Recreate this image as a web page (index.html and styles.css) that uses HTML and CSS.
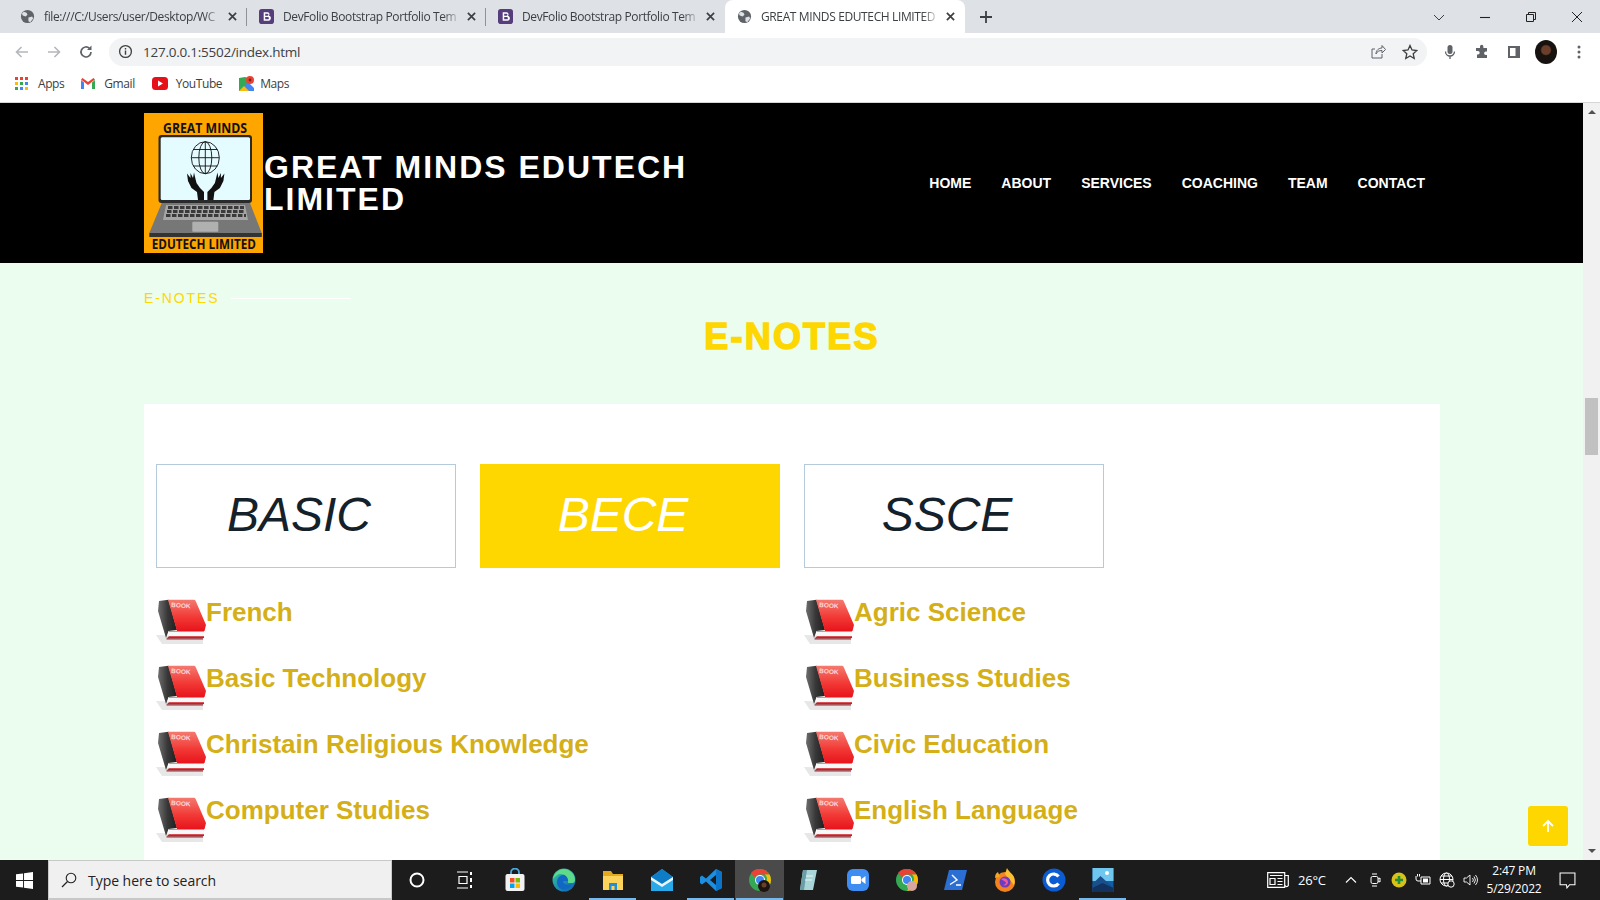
FILE: index.html
```html
<!DOCTYPE html>
<html>
<head>
<title>GREAT MINDS EDUTECH LIMITED</title>
<link rel="stylesheet" href="styles.css">
</head>
<body>

<!-- shared icons -->
<svg class="defs" width="0" height="0">
    <defs>
        <linearGradient id="coverRed" x1="0" y1="0" x2="0" y2="1">
            <stop offset="0" stop-color="#f47a70"/>
            <stop offset="0.55" stop-color="#f23a36"/>
            <stop offset="1" stop-color="#e8141c"/>
        </linearGradient>
        <linearGradient id="spineDark" x1="0" y1="0" x2="1" y2="0">
            <stop offset="0" stop-color="#6e6e6e"/>
            <stop offset="0.5" stop-color="#383838"/>
            <stop offset="1" stop-color="#1e1e1e"/>
        </linearGradient>
        <linearGradient id="edgeGrad" x1="0" y1="0" x2="1" y2="1">
            <stop offset="0" stop-color="#36c6a0"/>
            <stop offset="1" stop-color="#0c5fb5"/>
        </linearGradient>
    </defs>
    <symbol id="globe" viewBox="0 0 16 16">
        <circle cx="8" cy="8" r="7" fill="#5f6368"/>
        <path d="M4 3l3 1 1 2-2 2-3-1-1-2zM9 9l4-1 1 2-3 4-2-1z" fill="#dee1e6"/>
    </symbol>
    <symbol id="bs" viewBox="0 0 16 16">
        <rect width="16" height="16" rx="3" fill="#563d7c"/>
        <path d="M5 3.500h4a2.200 2.200 0 0 1 1.500 3.800A2.400 2.400 0 0 1 9.500 12.500H5zM6.600 5v2.200H9a1.100 1.100 0 0 0 0-2.200zM6.600 8.500V11H9.300a1.250 1.250 0 0 0 0-2.500z" fill="#fff" fill-rule="evenodd"/>
    </symbol>
    <symbol id="close" viewBox="0 0 10 10">
        <path d="M1 1l8 8M9 1l-8 8" stroke="#3c4043" stroke-width="1.900" fill="none"/>
    </symbol>
    <symbol id="book" viewBox="0 0 50 46">
        <path d="M0 36l40 1 7 3v5H6z" fill="#e6e7e6"/>
        <path d="M3 2l9.500-1.300L21 31l-8.500 1-2.500 7L2 12z" fill="url(#spineDark)"/>
        <path d="M12 .7h26c1 0 1.500 .8 2 2L50 26l-1.500 6H21z" fill="url(#coverRed)"/>
        <path d="M13 32h35v5.500H13z" fill="#f8f8f8"/>
        <path d="M13 32h35v.8H13z" fill="#8a8a8a"/>
        <path d="M10.500 39.500l2.500-2.200h35v1l-1 1.200z" fill="#d01a22"/>
        <path d="M10.500 40h36.500" stroke="#5a1014" stroke-width=".8"/>
        <text x="15" y="8" class="book-word" transform="rotate(4 15 8)">BOOK</text>
    </symbol>
    <symbol id="chromeLogo" viewBox="0 0 24 24">
        <circle cx="12" cy="12" r="11" fill="#34a853"/>
        <path d="M12 1a11 11 0 0 1 9.500 5.500H12a5.500 5.500 0 0 0-5 3L3 5a11 11 0 0 1 9-4z" fill="#ea4335"/>
        <path d="M21.500 6.500A11 11 0 0 1 12 23l5-8a5.500 5.500 0 0 0 0-8.500z" fill="#fbbc05"/>
        <circle cx="12" cy="12" r="5" fill="#fff"/>
        <circle cx="12" cy="12" r="4" fill="#4285f4"/>
    </symbol>
</svg>

<!-- browser tab strip -->
<div class="tabstrip">
    <div class="tab">
        <svg class="favicon"><use href="#globe"/></svg>
        <span class="tab-title">file:///C:/Users/user/Desktop/WC</span>
        <svg class="tab-close"><use href="#close"/></svg>
    </div>
    <div class="tab">
        <svg class="favicon"><use href="#bs"/></svg>
        <span class="tab-title">DevFolio Bootstrap Portfolio Tem</span>
        <svg class="tab-close"><use href="#close"/></svg>
    </div>
    <div class="tab tab-last">
        <svg class="favicon"><use href="#bs"/></svg>
        <span class="tab-title">DevFolio Bootstrap Portfolio Tem</span>
        <svg class="tab-close"><use href="#close"/></svg>
    </div>
    <div class="tab tab-active">
        <svg class="favicon"><use href="#globe"/></svg>
        <span class="tab-title">GREAT MINDS EDUTECH LIMITED</span>
        <svg class="tab-close"><use href="#close"/></svg>
    </div>
    <svg class="new-tab" viewBox="0 0 14 14"><path d="M7 1v12M1 7h12" stroke="#3c4043" stroke-width="1.800"/></svg>
    <div class="win-controls">
        <svg viewBox="0 0 12 12"><path d="M1 4l5 5 5-5" stroke="#3c4043" fill="none"/></svg>
        <svg viewBox="0 0 12 12"><path d="M1 6.500h10" stroke="#222" stroke-width="1.100"/></svg>
        <svg viewBox="0 0 12 12"><path d="M1.500 3.500h7v7h-7zM3.500 3.500v-2h7v7h-2" stroke="#222" fill="none"/></svg>
        <svg viewBox="0 0 12 12"><path d="M1 1l10 10M11 1L1 11" stroke="#222" fill="none"/></svg>
    </div>
</div>

<!-- address bar -->
<div class="toolbar">
    <svg class="tool-icon" viewBox="0 0 16 16"><path d="M14 8H3M7.500 3L2.500 8l5 5" stroke="#b4b7bb" stroke-width="1.600" fill="none"/></svg>
    <svg class="tool-icon" viewBox="0 0 16 16"><path d="M2 8h11M8.500 3l5 5-5 5" stroke="#b4b7bb" stroke-width="1.600" fill="none"/></svg>
    <svg class="tool-icon" viewBox="0 0 16 16"><path d="M13 8a5 5 0 1 1-1.500-3.600" stroke="#5f6368" stroke-width="1.700" fill="none"/><path d="M13.500 1.500v4.500H9z" fill="#5f6368"/></svg>
    <div class="omnibox">
        <svg class="info-icon" viewBox="0 0 16 16"><circle cx="8" cy="8" r="6.300" stroke="#3c4043" stroke-width="1.400" fill="none"/><path d="M8 7v4.500M8 4.300v1.500" stroke="#3c4043" stroke-width="1.500"/></svg>
        <span class="url">127.0.0.1:5502/index.html</span>
        <svg class="omni-icon omni-share" viewBox="0 0 16 16"><path d="M12 10v4H2V5h3M6 10c0-4 3-6 6-6V1.500L15.500 5.500 12 9V6.500c-3 0-5 1-6 3.500z" stroke="#5f6368" fill="none"/></svg>
        <svg class="omni-icon" viewBox="0 0 16 16"><path d="M8 1.500l2 4.500 4.800 .5-3.600 3.200 1 4.800L8 12l-4.200 2.500 1-4.800L1.200 6.500 6 6z" stroke="#3c4043" stroke-width="1.300" fill="none"/></svg>
    </div>
    <div class="tool-right">
        <svg class="tool-icon" viewBox="0 0 16 16"><rect x="5.500" y="1" width="5" height="9" rx="2.500" fill="#5f6368"/><path d="M3.500 7.500a4.500 4.500 0 0 0 9 0M8 12v3" stroke="#5f6368" stroke-width="1.300" fill="none"/></svg>
        <svg class="tool-icon" viewBox="0 0 16 16"><path d="M6 2.500a1.700 1.700 0 0 1 3.400 0V4H13v3.500h-1.200a1.700 1.700 0 0 0 0 3.400H13V14H3v-3.500h1a1.700 1.700 0 0 0 0-3.400H2V4h4z" fill="#5f6368"/></svg>
        <svg class="tool-icon tool-panel" viewBox="0 0 16 16"><path d="M2 2h12v12H2zM4 4v8h5.500V4z" fill="#5f6368" fill-rule="evenodd"/></svg>
        <div class="avatar"></div>
        <svg class="tool-icon tool-menu" viewBox="0 0 16 16"><circle cx="8" cy="3" r="1.500" fill="#5f6368"/><circle cx="8" cy="8" r="1.500" fill="#5f6368"/><circle cx="8" cy="13" r="1.500" fill="#5f6368"/></svg>
    </div>
</div>

<!-- bookmarks -->
<div class="bookmarks">
    <a class="bm bm-apps">
        <svg viewBox="0 0 13 13">
            <g fill="#ea4335"><rect width="3" height="3"/><rect x="5" width="3" height="3"/><rect x="10" width="3" height="3"/></g>
            <g fill="#fbbc05"><rect y="5" width="3" height="3"/></g>
            <g fill="#34a853"><rect x="5" y="5" width="3" height="3"/><rect y="10" width="3" height="3"/></g>
            <g fill="#4285f4"><rect x="10" y="5" width="3" height="3"/><rect x="5" y="10" width="3" height="3"/><rect x="10" y="10" width="3" height="3" fill="#fbbc05"/></g>
        </svg>
        Apps
    </a>
    <a class="bm bm-gmail">
        <svg viewBox="0 0 14 11"><path d="M0 2v9h3V4.500z" fill="#4285f4"/><path d="M14 2v9h-3V4.500z" fill="#34a853"/><path d="M0 1.500 7 7l7-5.500L12.500 0 7 4 1.500 0z" fill="#ea4335"/></svg>
        Gmail
    </a>
    <a class="bm bm-yt">
        <svg viewBox="0 0 16 13"><rect width="16" height="13" rx="3.500" fill="#e5101a"/><path d="M6 3.500v6l5-3z" fill="#fff"/></svg>
        YouTube
    </a>
    <a class="bm bm-maps">
        <svg viewBox="0 0 15 15"><path d="M0 2l6-1 3 1v12l-3 1H0z" fill="#34a853"/><path d="M0 15l9-9 6 6v3z" fill="#4285f4"/><path d="M0 15l5-5 5 5z" fill="#fbbc05"/><circle cx="11" cy="4" r="4" fill="#ea4335"/><circle cx="11" cy="4" r="1.400" fill="#8e1b14"/></svg>
        Maps
    </a>
</div>

<div class="viewport">
    <div class="page">
        <header class="site-header">
            <svg class="logo" viewBox="0 0 119 140">
                <rect width="119" height="140" fill="#ffa500"/>
                <text x="19" y="19.500" class="logo-text" textLength="84" lengthAdjust="spacingAndGlyphs">GREAT MINDS</text>
                <rect x="14.500" y="22" width="93.500" height="68" rx="3" fill="#2a2a2a"/>
                <rect x="16.700" y="24.300" width="89.300" height="62.700" rx="1.500" fill="#e4fbff"/>
                <g fill="none" stroke="#111" stroke-width=".9">
                    <ellipse cx="61.300" cy="44.700" rx="14" ry="16"/>
                    <ellipse cx="61.300" cy="44.700" rx="6.500" ry="16"/>
                    <path d="M61.300 28.700v32M47.300 44.700h28M49 36.500h24.600M49 53h24.600"/>
                </g>
                <path id="hand" d="M54 87L53 79 47.500 75 44 68 43 60.500 46.500 65 46.500 60 49 65 50 59.500 51.500 66 52.500 70 56 75 60 79 60 87z" fill="#111"/>
                <use href="#hand" transform="matrix(-1 0 0 1 123.400 0)"/>
                <path d="M17.700 90H106l11.700 30H5.300z" fill="#777"/>
                <rect x="5.300" y="120" width="112.500" height="4" fill="#333"/>
                <path d="M22 92h79l3 15H19z" fill="#a6a6a6"/>
                <g stroke="#3a3a3a" stroke-width="2.800" stroke-dasharray="4.500 1.500">
                    <path d="M24 94.500h76M23 98.500h78M22 102.500h80"/>
                </g>
                <rect x="48.300" y="108.700" width="26" height="10" rx="1" fill="#b0b0b0"/>
                <text x="7.700" y="136" class="logo-text" textLength="104.300" lengthAdjust="spacingAndGlyphs">EDUTECH LIMITED</text>
            </svg>
            <div class="brand">GREAT MINDS EDUTECH LIMITED</div>
            <nav class="site-nav">
                <a>Home</a>
                <a>About</a>
                <a>Services</a>
                <a>Coaching</a>
                <a>Team</a>
                <a>Contact</a>
            </nav>
        </header>

        <section class="notes">
            <div class="eyebrow"><span>E-NOTES</span><i class="eyebrow-line"></i></div>
            <h1 class="notes-title">E-NOTES</h1>

            <div class="notes-card">
                <div class="level-tabs">
                    <a class="level">BASIC</a>
                    <a class="level level-on">BECE</a>
                    <a class="level">SSCE</a>
                </div>
                <ul class="subjects">
                    <li><svg class="book"><use href="#book"/></svg>French</li>
                    <li><svg class="book"><use href="#book"/></svg>Agric Science</li>
                    <li><svg class="book"><use href="#book"/></svg>Basic Technology</li>
                    <li><svg class="book"><use href="#book"/></svg>Business Studies</li>
                    <li><svg class="book"><use href="#book"/></svg>Christain Religious Knowledge</li>
                    <li><svg class="book"><use href="#book"/></svg>Civic Education</li>
                    <li><svg class="book"><use href="#book"/></svg>Computer Studies</li>
                    <li><svg class="book"><use href="#book"/></svg>English Language</li>
                </ul>
            </div>
        </section>

        <a class="to-top">
            <svg viewBox="0 0 14 14"><path d="M7 13V2M2 7l5-5 5 5" stroke="#fff" stroke-width="1.800" fill="none"/></svg>
        </a>
    </div>

    <div class="scrollbar">
        <div class="sb-arrow sb-up"></div>
        <div class="sb-thumb"></div>
        <div class="sb-arrow sb-down"></div>
    </div>
</div>

<!-- windows taskbar -->
<div class="taskbar">
    <div class="start">
        <svg viewBox="0 0 18 18"><path d="M0 2.500l7.500-1v7H0zM8.500 1.300L18 0v8.500H8.500zM0 9.500h7.500v7l-7.500-1zM8.500 9.500H18V18l-9.500-1.300z" fill="#fff"/></svg>
    </div>
    <div class="search">
        <svg viewBox="0 0 16 16"><circle cx="10" cy="6" r="4.800" stroke="#222" stroke-width="1.100" fill="none"/><path d="M6.500 9.500L1 15" stroke="#222" stroke-width="1.300"/></svg>
        <span>Type here to search</span>
    </div>
    <div class="task-item"><svg viewBox="0 0 24 24"><circle cx="12" cy="12" r="6.500" stroke="#fff" stroke-width="2" fill="none"/></svg></div>
    <div class="task-item"><svg viewBox="0 0 24 24"><path d="M3 4h11M3 20h11M5 8.500h8v7H5z" stroke="#fff" stroke-width="1.200" fill="none"/><path d="M17 4v3M17 10v4M17 17v3" stroke="#fff" stroke-width="2"/></svg></div>
    <div class="task-item"><svg viewBox="0 0 24 24"><path d="M8 7V4.500a4 4 0 0 1 8 0V7" stroke="#4aa8e0" stroke-width="1.800" fill="none"/><rect x="2.500" y="6" width="19" height="17" rx="2" fill="#f2f2f2"/><rect x="7" y="10" width="4.500" height="4.500" fill="#f25022"/><rect x="12.500" y="10" width="4.500" height="4.500" fill="#7fba00"/><rect x="7" y="15.500" width="4.500" height="4.500" fill="#00a4ef"/><rect x="12.500" y="15.500" width="4.500" height="4.500" fill="#ffb900"/></svg></div>
    <div class="task-item"><svg viewBox="0 0 24 24"><circle cx="12" cy="12" r="11.500" fill="url(#edgeGrad)"/><path d="M5 14c0-6 6-8 9-7s4 4 3 6h-6c0 3 4 5 9 3-2 5-8 7-11 5-3-1.500-4-4-4-7z" fill="#1168c4"/><path d="M12 1c5 0 11 4 11 11 0 2-1 3-3 3h-4c1-5-2-9-8-9-2 0-5 2-7 5 1-6 6-10 11-10z" fill="#5edb8a"/></svg></div>
    <div class="task-item task-open"><svg viewBox="0 0 24 24"><path d="M2 3h8l2 3h10v4H2z" fill="#e4a91c"/><rect x="2" y="8" width="20" height="14" fill="#fcd45b"/><rect x="8" y="15" width="8" height="7" fill="#1f8fd8"/><rect x="10.500" y="18" width="3" height="4" fill="#fcd45b"/></svg></div>
    <div class="task-item"><svg viewBox="0 0 24 24"><path d="M1 9l11-8 11 8v14H1z" fill="#29a9e8"/><path d="M1 9l11-8 11 8-11 7z" fill="#0e7cc7"/><path d="M1 9l11 7 11-7v3L12 19 1 12z" fill="#e8f6fd"/></svg></div>
    <div class="task-item task-open"><svg viewBox="0 0 24 24"><path d="M17 1l6 3v16l-6 3-10-9.500-4 3L1 15V9l2-1.500 4 3zM17 7l-6 5 6 5z" fill="#1c8fe0" fill-rule="evenodd"/><path d="M17 1l6 3v16l-6 3z" fill="#0b74c8"/></svg></div>
    <div class="task-item task-active task-open"><svg viewBox="0 0 24 24"><use href="#chromeLogo"/><circle cx="16" cy="18" r="6" fill="#1d1512"/><circle cx="16" cy="17" r="2.500" fill="#6b3f2b"/></svg></div>
    <div class="task-item"><svg viewBox="0 0 24 24"><path d="M6 2h14l-4 20H3z" fill="#a9d4d8"/><path d="M6 2h4L7 22H3z" fill="#6a9ea6"/><path d="M9 8h7M8 12h7" stroke="#e6f7f8" stroke-width="1"/></svg></div>
    <div class="task-item"><svg viewBox="0 0 24 24"><rect x="1" y="1" width="22" height="22" rx="6" fill="#3d8df2"/><rect x="5" y="8" width="10" height="8" rx="1.500" fill="#fff"/><path d="M15.500 11l4-3v8l-4-3z" fill="#fff"/></svg></div>
    <div class="task-item"><svg viewBox="0 0 24 24"><use href="#chromeLogo"/><circle cx="17" cy="18" r="5" fill="#d9a5a0"/></svg></div>
    <div class="task-item"><svg viewBox="0 0 24 24"><path d="M5 2h18l-5 20H0z" fill="#2b6fd4"/><path d="M8 7l5 5-7 4.500M12 17h5" stroke="#fff" stroke-width="1.400" fill="none"/></svg></div>
    <div class="task-item"><svg viewBox="0 0 24 24"><circle cx="12" cy="14" r="10" fill="#f4821f"/><path d="M14 0c1 3 5 5 7 9 1 3 1 6 0 8L12 6z" fill="#fcc02e"/><path d="M2 10c0-3 1-5 3-6l2 5z" fill="#f5a623"/><circle cx="12" cy="14" r="5.500" fill="#6a3ec2"/><path d="M8 11c3-2 7 0 7 3s-3 4-5 3c3 0 4-3 1-4z" fill="#ef5a9a"/></svg></div>
    <div class="task-item"><svg viewBox="0 0 24 24"><circle cx="12" cy="12" r="11.500" fill="#0b5bd3"/><path d="M16.500 8.500a6 6 0 1 0 0 7" stroke="#fff" stroke-width="3.200" fill="none"/></svg></div>
    <div class="task-item task-open"><svg viewBox="0 0 24 24"><rect x="1.500" y="0" width="21" height="24" fill="#0f5fa8"/><rect x="1.500" y="0" width="21" height="13" fill="#6fc6ee"/><circle cx="16" cy="5" r="2" fill="#fff"/><path d="M1.500 16l8-8 13 12v4h-21z" fill="#1a4f8c"/><path d="M1.500 24v-4l10-5 11 5v4z" fill="#12325f"/></svg></div>

    <div class="tray">
        <svg class="tray-news" viewBox="0 0 22 16"><path d="M.7 .7h17v14.600h-17zM18 3.500h3.300v10a1.800 1.800 0 0 1-3.300 0M3 3.500h12.500M3 6.500h5v6H3zM10.500 6.500h5M10.500 9.500h5M10.500 12.500h5" stroke="#fff" stroke-width="1.200" fill="none"/></svg>
        <span class="tray-temp">26°C</span>
        <div class="tray-icons">
            <svg viewBox="0 0 16 16"><path d="M3 10.500l5-5 5 5" stroke="#fff" stroke-width="1.100" fill="none"/></svg>
            <svg viewBox="0 0 16 16"><rect x="4" y="4.500" width="7" height="7" rx="1.500" stroke="#fff" fill="none"/><path d="M5 2h5M5 14h5M11 7l2-1v4l-2-1" stroke="#fff" fill="none"/></svg>
            <svg viewBox="0 0 16 16"><circle cx="8" cy="8" r="7.500" fill="#d8c21a"/><path d="M8 4v8M4 8h8" stroke="#1f8f3a" stroke-width="2.600"/></svg>
            <svg viewBox="0 0 16 16"><path d="M6 5h9v7H6zM1 4v3a2 2 0 0 0 2 2h3M2.500 2v2.500M4.500 2v2.500" stroke="#fff" fill="none"/><rect x="8" y="6.500" width="5" height="4" fill="#fff"/></svg>
            <svg viewBox="0 0 16 16"><circle cx="7.500" cy="7.500" r="6.500" stroke="#fff" fill="none"/><ellipse cx="7.500" cy="7.500" rx="3" ry="6.500" stroke="#fff" fill="none"/><path d="M1 7.500h13M2 4h11M2 11h11" stroke="#fff" fill="none"/><circle cx="12" cy="12" r="3.200" fill="#1c1c1c" stroke="#fff"/></svg>
            <svg viewBox="0 0 16 16"><path d="M1 6v4h2.500L7 13V3L3.500 6zM9.500 6a3 3 0 0 1 0 4M11 4.500a5.500 5.500 0 0 1 0 7M12.500 3a8 8 0 0 1 0 10" stroke="#fff" stroke-width=".9" fill="none"/></svg>
        </div>
        <div class="clock"><span>2:47 PM</span><span>5/29/2022</span></div>
        <div class="notify">
            <svg viewBox="0 0 16 16"><path d="M1 1h14v11h-5l-2.500 3-.5-3H1z" stroke="#fff" fill="none"/></svg>
        </div>
    </div>
</div>

</body>
</html>
```

FILE: styles.css
```css
/* Basic styling for the page */
* {
    box-sizing: border-box;
}

html, body {
    margin: 0;
    height: 100%;
    overflow: hidden;
}

body {
    display: flex;
    flex-direction: column;
    font-family: "Liberation Sans", Arial, sans-serif;
    background: #fff;
}

.defs {
    position: absolute;
}

/* browser chrome */
.tabstrip {
    display: flex;
    align-items: center;
    height: 33px;
    padding-left: 8px;
    background: #dee1e6;
    font-family: "Open Sans", sans-serif;
    font-size: 12px;
    color: #3c4043;
}

.tab {
    display: flex;
    align-items: center;
    width: 239px;
    height: 33px;
    padding: 0 10px 0 12px;
    position: relative;
}

.tab::after {
    content: "";
    position: absolute;
    right: 0;
    top: 8px;
    height: 18px;
    width: 1px;
    background: #8f9296;
}

.tab-last::after, .tab-active::after {
    display: none;
}

.tab-active {
    width: 240px;
    background: #fff;
    border-radius: 8px 8px 0 0;
}

.favicon {
    width: 15px;
    height: 15px;
    flex: none;
    margin-right: 9px;
}

.tab-title {
    flex: 1;
    min-width: 0;
    white-space: nowrap;
    letter-spacing: -0.38px;
    -webkit-mask-image: linear-gradient(to right, #000 90%, transparent);
    mask-image: linear-gradient(to right, #000 90%, transparent);
}

.tab-close {
    width: 9px;
    height: 9px;
    flex: none;
    margin-left: 6px;
}

.new-tab {
    width: 14px;
    height: 14px;
    margin-left: 14px;
}

.win-controls {
    display: flex;
    margin-left: auto;
    height: 30px;
    align-items: center;
    padding-right: 17px;
    gap: 34px;
}

.win-controls svg {
    width: 12px;
    height: 12px;
}

.toolbar {
    display: flex;
    align-items: center;
    height: 37px;
    padding-left: 14px;
    background: #fff;
}

.tool-icon {
    width: 16px;
    height: 16px;
    flex: none;
    margin-right: 16px;
}

.omnibox {
    display: flex;
    flex: none;
    align-items: center;
    width: 1318px;
    height: 28px;
    margin-left: -1px;
    padding: 0 9px 0 9px;
    border-radius: 14px;
    background: #f1f3f4;
}

.info-icon {
    width: 15px;
    height: 15px;
    margin-right: 10px;
}

.url {
    font-family: "Open Sans", sans-serif;
    font-size: 13.500px;
    letter-spacing: -0.25px;
    color: #3c4043;
}

.omni-icon {
    width: 16px;
    height: 16px;
    margin-left: 16px;
}

.omni-share {
    margin-left: auto;
}

.tool-right {
    display: flex;
    flex: none;
    align-items: center;
    margin-left: 15px;
}

.tool-panel {
    margin-right: 13px;
}

.tool-menu {
    margin-right: 0;
}

.avatar {
    width: 22px;
    height: 24px;
    margin-right: 14px;
    border-radius: 50%;
    background: radial-gradient(circle at 50% 42%, #6b3f2b 0 24%, #171210 32%);
}

.bookmarks {
    display: flex;
    align-items: center;
    height: 33px;
    padding: 0 0 5px 15px;
    border-bottom: 1px solid #d6d6d6;
    font-family: "Open Sans", sans-serif;
    font-size: 12px;
    letter-spacing: -0.42px;
    color: #3c4043;
}

.bm {
    display: flex;
    align-items: center;
}

.bm svg {
    flex: none;
}

.bm-apps svg {
    width: 13px;
    height: 13px;
    margin-right: 10px;
}

.bm-gmail {
    margin-left: 17px;
}

.bm-gmail svg {
    width: 14px;
    height: 11px;
    margin-right: 9px;
}

.bm-yt {
    margin-left: 17px;
}

.bm-yt svg {
    width: 16px;
    height: 13px;
    margin-right: 8px;
}

.bm-maps {
    margin-left: 17px;
}

.bm-maps svg {
    width: 15px;
    height: 15px;
    margin-right: 6px;
}

/* page area */
.viewport {
    display: flex;
    flex: 1;
    min-height: 0;
}

.page {
    flex: 1;
    min-width: 0;
    overflow: hidden;
    position: relative;
    background: #eafdef;
}

.site-header {
    display: flex;
    align-items: center;
    height: 160px;
    padding: 0 158px 0 144px;
    background: #000;
}

.logo {
    width: 119px;
    height: 140px;
    flex: none;
    margin-right: 1px;
}

.logo-text {
    font-family: "Open Sans", sans-serif;
    font-weight: 700;
    font-size: 14px;
    fill: #111;
}

.brand {
    width: 440px;
    font-size: 32px;
    line-height: 32px;
    font-weight: 700;
    letter-spacing: 2px;
    color: #fff;
}

.site-nav {
    display: flex;
    gap: 30px;
    margin-left: auto;
}

.site-nav a {
    font-size: 14px;
    font-weight: 700;
    text-transform: uppercase;
    color: #fff;
}

.notes {
    padding: 25px 143px 0 144px;
}

.eyebrow {
    display: flex;
    align-items: center;
    height: 20px;
    font-size: 14px;
    letter-spacing: 1.900px;
    color: #ffd700;
}

.eyebrow-line {
    width: 120px;
    height: 1px;
    margin-left: 11px;
    background: #fff;
}

.notes-title {
    margin: 7px 0 0;
    text-align: center;
    font-size: 36px;
    line-height: 44px;
    font-weight: 700;
    letter-spacing: 2.200px;
    -webkit-text-stroke: 1.500px #ffd700;
    color: #ffd700;
}

.notes-card {
    height: 500px;
    margin-top: 45px;
    padding: 60px 12px 0;
    background: #fff;
}

.level-tabs {
    display: grid;
    grid-template-columns: repeat(3, 300px);
    gap: 24px;
}

.level {
    height: 104px;
    padding-right: 14px;
    border: 1px solid #b5cbdc;
    font-size: 48px;
    line-height: 100px;
    font-style: italic;
    text-align: center;
    color: #14212b;
}

.level-on {
    border-color: #ffd700;
    background: #ffd700;
    color: #fff;
}

.subjects {
    display: grid;
    grid-template-columns: 648px 1fr;
    margin: 31px 0 0;
    padding: 0;
    list-style: none;
}

.subjects li {
    display: flex;
    height: 66px;
    font-size: 26px;
    line-height: 26px;
    font-weight: 700;
    color: #d4af17;
}

.book {
    width: 50px;
    height: 46px;
    flex: none;
}

.book-word {
    font-family: "Liberation Sans", sans-serif;
    font-size: 6.500px;
    fill: #ffdcd8;
}

.to-top {
    position: absolute;
    right: 15px;
    bottom: 14px;
    display: flex;
    align-items: center;
    justify-content: center;
    width: 40px;
    height: 40px;
    border-radius: 3px;
    background: #ffd700;
}

.to-top svg {
    width: 14px;
    height: 14px;
}

.scrollbar {
    display: flex;
    flex-direction: column;
    align-items: center;
    width: 17px;
    background: #f1f1f1;
}

.sb-arrow {
    width: 0;
    height: 0;
    border-left: 4px solid transparent;
    border-right: 4px solid transparent;
}

.sb-up {
    margin-top: 7px;
    border-bottom: 4px solid #505050;
}

.sb-thumb {
    width: 13px;
    height: 57px;
    margin-top: 284px;
    background: #c1c1c1;
}

.sb-down {
    margin-top: auto;
    margin-bottom: 7px;
    border-top: 4px solid #505050;
}

/* taskbar */
.taskbar {
    display: flex;
    height: 40px;
    flex: none;
    background: #1c1c1c;
    color: #fff;
    font-family: "Open Sans", sans-serif;
}

.start {
    display: flex;
    align-items: center;
    justify-content: center;
    width: 48px;
}

.start svg {
    width: 17px;
    height: 17px;
}

.search {
    display: flex;
    align-items: center;
    width: 344px;
    padding: 1px 0 0 12px;
    border: 1px solid #c8c8c8;
    border-bottom-width: 2px;
    background: #f0f0f0;
    font-size: 14px;
    letter-spacing: -0.04px;
    color: #222;
}

.search svg {
    width: 16px;
    height: 16px;
    margin-right: 11px;
}

.task-item {
    display: flex;
    align-items: center;
    justify-content: center;
    width: 49px;
    position: relative;
}

.task-item svg {
    width: 24px;
    height: 24px;
}

.task-open::after {
    content: "";
    position: absolute;
    left: 1px;
    right: 1px;
    bottom: 0;
    height: 2px;
    background: #76b9ed;
}

.task-active {
    background: #4a4a4a;
}

.tray {
    display: flex;
    align-items: center;
    margin-left: auto;
    padding-right: 11px;
}

.tray-news {
    width: 22px;
    height: 16px;
    margin-right: 9px;
}

.tray-temp {
    width: 41px;
    font-size: 13px;
    letter-spacing: -0.2px;
}

.tray-icons {
    display: flex;
}

.tray-icons svg {
    width: 16px;
    height: 16px;
    margin: 0 4px;
}

.clock {
    display: flex;
    flex-direction: column;
    align-items: center;
    width: 62px;
    font-size: 12px;
    line-height: 18px;
    letter-spacing: -0.2px;
}

.notify {
    display: flex;
    justify-content: center;
    width: 44px;
}

.notify svg {
    width: 17px;
    height: 17px;
}
```
